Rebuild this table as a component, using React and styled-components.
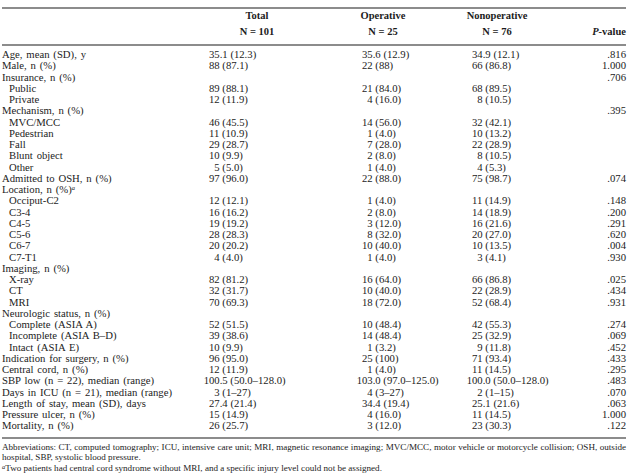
import React from "react";
import styled, { createGlobalStyle } from "styled-components";

const Global = createGlobalStyle`
  html, body { margin: 0; padding: 0; background: #fff; }
  body { font-family: "Liberation Serif", "Times New Roman", serif; color: #1c1c1c; }
`;

const COLS = "195px 140px 120px 120px 1fr";

const Page = styled.div`
  width: 630px;
  height: 475px;
  padding: 7px 4px 0 2px;
  box-sizing: border-box;
  overflow: hidden;
`;

const Rule = styled.div`
  height: 2px;
  background: #8c8c8c;
`;

const Head = styled.div`
  display: grid;
  grid-template-columns: ${COLS};
  grid-template-rows: 13px 19px;
  padding-bottom: 3px;
  font-weight: bold;
  font-size: 10.5px;
`;

/* centred on a point given as an offset from the column's left edge */
const HeadCell = styled.div`
  grid-column: ${(p) => p.$col};
  grid-row: ${(p) => p.$row};
  width: 120px;
  margin-left: ${(p) => p.$center - 60}px;
  text-align: center;
  align-self: center;
  white-space: nowrap;
`;

const PHead = styled.div`
  grid-column: 5;
  grid-row: 2;
  text-align: right;
  align-self: center;
  white-space: nowrap;
`;

const Body = styled.div`
  padding: 3px 0 5px;
`;

const Row = styled.div`
  display: grid;
  grid-template-columns: ${COLS};
  height: 11.25px;
  line-height: 11.25px;
  font-size: 10.7px;
  white-space: nowrap;
`;

const Label = styled.div`
  padding-left: ${(p) => (p.$sub ? 7 : 0)}px;
  word-spacing: 1.2px;
`;

const Cell = styled.div`
  padding-left: ${(p) => p.$pad}px;
`;

const PCell = styled.div`
  text-align: right;
`;

const Sup = styled.sup`
  font-size: 6.5px;
  vertical-align: top;
  line-height: 8px;
  font-style: italic;
`;

const Notes = styled.div`
  padding-top: 3px;
  font-size: 9.1px;
  line-height: 10.5px;
  white-space: nowrap;
`;

const NoteLine = styled.div`
  text-align: ${(p) => (p.$justify ? "justify" : "left")};
  text-align-last: ${(p) => (p.$justify ? "justify" : "left")};
`;

const rows = [
  ["Age, mean (SD), y", 0, "35.1 (12.3)", "35.6 (12.9)", "34.9 (12.1)", ".816"],
  ["Male, n (%)", 0, "88 (87.1)", "22 (88)", "66 (86.8)", "1.000"],
  ["Insurance, n (%)", 0, "", "", "", ".706"],
  ["Public", 1, "89 (88.1)", "21 (84.0)", "68 (89.5)", ""],
  ["Private", 1, "12 (11.9)", "4 (16.0)", "8 (10.5)", ""],
  ["Mechanism, n (%)", 0, "", "", "", ".395"],
  ["MVC/MCC", 1, "46 (45.5)", "14 (56.0)", "32 (42.1)", ""],
  ["Pedestrian", 1, "11 (10.9)", "1 (4.0)", "10 (13.2)", ""],
  ["Fall", 1, "29 (28.7)", "7 (28.0)", "22 (28.9)", ""],
  ["Blunt object", 1, "10 (9.9)", "2 (8.0)", "8 (10.5)", ""],
  ["Other", 1, "5 (5.0)", "1 (4.0)", "4 (5.3)", ""],
  ["Admitted to OSH, n (%)", 0, "97 (96.0)", "22 (88.0)", "75 (98.7)", ".074"],
  ["LOC", 0, "", "", "", ""],
  ["Occiput-C2", 1, "12 (12.1)", "1 (4.0)", "11 (14.9)", ".148"],
  ["C3-4", 1, "16 (16.2)", "2 (8.0)", "14 (18.9)", ".200"],
  ["C4-5", 1, "19 (19.2)", "3 (12.0)", "16 (21.6)", ".291"],
  ["C5-6", 1, "28 (28.3)", "8 (32.0)", "20 (27.0)", ".620"],
  ["C6-7", 1, "20 (20.2)", "10 (40.0)", "10 (13.5)", ".004"],
  ["C7-T1", 1, "4 (4.0)", "1 (4.0)", "3 (4.1)", ".930"],
  ["Imaging, n (%)", 0, "", "", "", ""],
  ["X-ray", 1, "82 (81.2)", "16 (64.0)", "66 (86.8)", ".025"],
  ["CT", 1, "32 (31.7)", "10 (40.0)", "22 (28.9)", ".434"],
  ["MRI", 1, "70 (69.3)", "18 (72.0)", "52 (68.4)", ".931"],
  ["Neurologic status, n (%)", 0, "", "", "", ""],
  ["Complete (ASIA A)", 1, "52 (51.5)", "10 (48.4)", "42 (55.3)", ".274"],
  ["Incomplete (ASIA B\u2013D)", 1, "39 (38.6)", "14 (48.4)", "25 (32.9)", ".069"],
  ["Intact (ASIA E)", 1, "10 (9.9)", "1 (3.2)", "9 (11.8)", ".452"],
  ["Indication for surgery, n (%)", 0, "96 (95.0)", "25 (100)", "71 (93.4)", ".433"],
  ["Central cord, n (%)", 0, "12 (11.9)", "1 (4.0)", "11 (14.5)", ".295"],
  ["SBP low (n = 22), median (range)", 0, "100.5 (50.0\u2013128.0)", "103.0 (97.0\u2013125.0)", "100.0 (50.0\u2013128.0)", ".483"],
  ["Days in ICU (n = 21), median (range)", 0, "3 (1\u201327)", "4 (3\u201327)", "2 (1\u201315)", ".070"],
  ["Length of stay, mean (SD), days", 0, "27.4 (21.4)", "34.4 (19.4)", "25.1 (21.6)", ".063"],
  ["Pressure ulcer, n (%)", 0, "15 (14.9)", "4 (16.0)", "11 (14.5)", "1.000"],
  ["Mortality, n (%)", 0, "26 (25.7)", "3 (12.0)", "23 (30.3)", ".122"],
];

const DIGIT = 5.35;
const padFor = (text, base) => {
  const m = text.match(/^\d+/);
  const n = m ? m[0].length : 2;
  return base + (2 - n) * DIGIT;
};

const BASES = [12, 25, 15];

export default function App() {
  return (
    <Page>
      <Global />
      <Rule />
      <Head>
        <HeadCell $col={2} $row={1} $center={60}>Total</HeadCell>
        <HeadCell $col={2} $row={2} $center={60}>N = 101</HeadCell>
        <HeadCell $col={3} $row={1} $center={46}>Operative</HeadCell>
        <HeadCell $col={3} $row={2} $center={46}>N = 25</HeadCell>
        <HeadCell $col={4} $row={1} $center={40}>Nonoperative</HeadCell>
        <HeadCell $col={4} $row={2} $center={40}>N = 76</HeadCell>
        <PHead>
          <i>P</i>-value
        </PHead>
      </Head>
      <Rule />
      <Body>
        {rows.map(([label, sub, t, o, n, p], i) => (
          <Row key={i}>
            <Label $sub={sub}>
              {label === "LOC" ? (
                <>
                  Location, n (%)<Sup>a</Sup>
                </>
              ) : (
                label
              )}
            </Label>
            {[t, o, n].map((v, j) => (
              <Cell key={j} $pad={padFor(v, BASES[j])}>
                {v}
              </Cell>
            ))}
            <PCell>{p}</PCell>
          </Row>
        ))}
      </Body>
      <Rule />
      <Notes>
        <NoteLine $justify>
          Abbreviations: CT, computed tomography; ICU, intensive care unit; MRI, magnetic resonance imaging; MVC/MCC, motor vehicle or motorcycle collision; OSH, outside
        </NoteLine>
        <NoteLine>hospital, SBP, systolic blood pressure.</NoteLine>
        <NoteLine>
          <Sup>a</Sup>Two patients had central cord syndrome without MRI, and a specific injury level could not be assigned.
        </NoteLine>
      </Notes>
    </Page>
  );
}
